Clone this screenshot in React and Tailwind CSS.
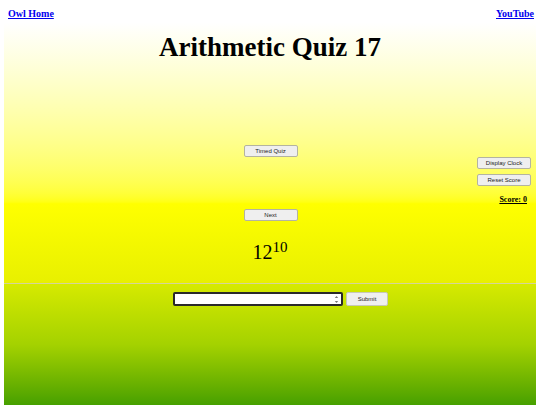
import React from "react";

const serif = { fontFamily: '"Liberation Serif", "Times New Roman", serif' };
const sans = { fontFamily: '"Liberation Sans", Arial, sans-serif' };

function SmallButton({ children, className = "" }) {
  return (
    <button
      style={sans}
      className={
        "h-[12px] w-[54px] rounded-[2px] border border-[#b4b4a0] bg-[#efefef] text-[6px] leading-none text-[#222]" +
        " " +
        className
      }
    >
      {children}
    </button>
  );
}

export default function App() {
  return (
    <div className="flex min-h-screen flex-col bg-white px-1" style={serif}>
      {/* top section */}
      <div className="h-[283px] bg-gradient-to-b from-white from-[8%] via-[#ffff00] via-[72%] to-[#e8f000]">
        <div className="flex justify-between pl-1 pr-[2px] pt-[8px] text-[10px] font-bold leading-[12px]">
          <a href="#" className="text-[#0000ee] underline">
            Owl Home
          </a>
          <a href="#" className="text-[#0000ee] underline">
            YouTube
          </a>
        </div>

        <h1 className="mt-[11px] text-center text-[27px] font-bold leading-[32px] text-black">
          Arithmetic Quiz 17
        </h1>

        <div className="mt-[82px] flex justify-center pl-[1px]">
          <SmallButton>Timed Quiz</SmallButton>
        </div>

        <div className="flex flex-col items-end pr-[5px]">
          <SmallButton>Display Clock</SmallButton>
          <SmallButton className="mt-[5px]">Reset Score</SmallButton>
          <a
            href="#"
            className="mr-[4px] mt-[9px] text-[8px] font-bold leading-[10px] text-black underline"
          >
            Score: 0
          </a>
        </div>

        <div className="mt-[4px] flex justify-center pl-[1px]">
          <SmallButton>Next</SmallButton>
        </div>

        <div className="mt-[19px] text-center text-[20px] leading-[24px] text-black">
          12<sup>10</sup>
        </div>
      </div>

      <div className="h-px bg-[#d4d49a]" />

      {/* answer section */}
      <div className="flex-1 bg-gradient-to-b from-[#d6ea00] via-[#a4d200] to-[#46a000] pt-[8px]">
        <div className="flex items-center justify-center gap-[3px] pl-[21px]">
          <div className="relative h-[14px] w-[170px] rounded-[2px] border-2 border-[#2a2a2a] bg-white">
            <svg
              className="absolute right-[2px] top-[1px]"
              width="5"
              height="9"
              viewBox="0 0 5 9"
            >
              <path d="M0.8 3 L2.5 1 L4.2 3 Z" fill="#777" />
              <path d="M0.8 6 L2.5 8 L4.2 6 Z" fill="#777" />
            </svg>
          </div>
          <button
            style={sans}
            className="h-[14px] w-[42px] rounded-[2px] border border-[#c8c8b8] bg-[#efefef] text-[6px] leading-none text-[#222]"
          >
            Submit
          </button>
        </div>
      </div>
    </div>
  );
}
